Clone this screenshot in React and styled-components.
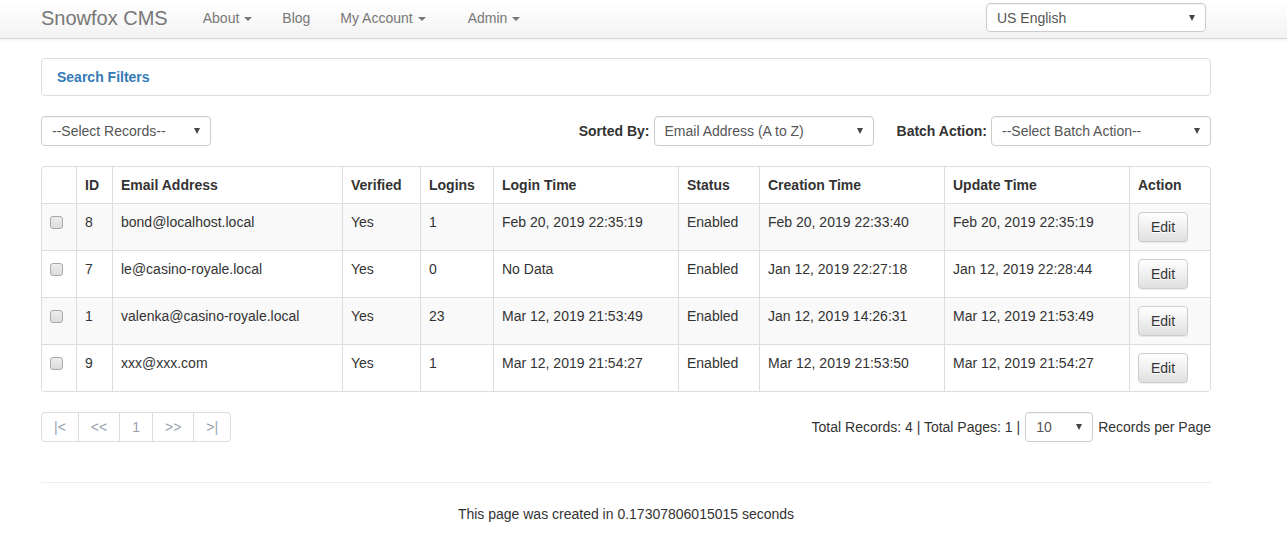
import React from "react";
import styled, { createGlobalStyle } from "styled-components";

const GlobalStyle = createGlobalStyle`
  body {
    margin: 0;
    background: #fff;
    font-family: "Liberation Sans", Arial, sans-serif;
    font-size: 14px;
    line-height: 20px;
    color: #333;
  }
  * { box-sizing: border-box; }
`;

const users = [
  { id: 8, email: "bond@localhost.local", verified: "Yes", logins: 1, login: "Feb 20, 2019 22:35:19", status: "Enabled", created: "Feb 20, 2019 22:33:40", updated: "Feb 20, 2019 22:35:19" },
  { id: 7, email: "le@casino-royale.local", verified: "Yes", logins: 0, login: "No Data", status: "Enabled", created: "Jan 12, 2019 22:27:18", updated: "Jan 12, 2019 22:28:44" },
  { id: 1, email: "valenka@casino-royale.local", verified: "Yes", logins: 23, login: "Mar 12, 2019 21:53:49", status: "Enabled", created: "Jan 12, 2019 14:26:31", updated: "Mar 12, 2019 21:53:49" },
  { id: 9, email: "xxx@xxx.com", verified: "Yes", logins: 1, login: "Mar 12, 2019 21:54:27", status: "Enabled", created: "Mar 12, 2019 21:53:50", updated: "Mar 12, 2019 21:54:27" },
];

const colWidths = [34, 36, 230, 78, 73, 185, 81, 185, 185, 81];
const headers = ["", "ID", "Email Address", "Verified", "Logins", "Login Time", "Status", "Creation Time", "Update Time", "Action"];

const Select = ({ width, height = 30, children }) => (
  <SelectBox $width={width} $height={height}>
    <span>{children}</span>
    <Arrow />
  </SelectBox>
);

const App = () => {
  return (
    <>
      <GlobalStyle />
      <Navbar>
        <NavInner>
          <Brand>Snowfox CMS</Brand>
          <NavLink $ml={35}>About <Caret /></NavLink>
          <NavLink $ml={30}>Blog</NavLink>
          <NavLink $ml={30}>My Account <Caret /></NavLink>
          <NavLink $ml={42}>Admin <Caret /></NavLink>
          <NavRight>
            <Select width={220} height={29}>US English</Select>
          </NavRight>
        </NavInner>
      </Navbar>

      <Container>
        <Panel>
          <PanelLink>Search Filters</PanelLink>
        </Panel>

        <Toolbar>
          <Select width={170}>--Select Records--</Select>
          <ToolGroup>
            <Label>Sorted By:</Label>
            <Select width={220}>Email Address (A to Z)</Select>
            <Label $ml={23}>Batch Action:</Label>
            <Select width={220}>--Select Batch Action--</Select>
          </ToolGroup>
        </Toolbar>

        <TableWrap>
          <Table>
            <colgroup>
              {colWidths.map((w, i) => (
                <col key={i} style={{ width: w }} />
              ))}
            </colgroup>
            <thead>
              <tr>
                {headers.map((h, i) => (
                  <Th key={i}>{h}</Th>
                ))}
              </tr>
            </thead>
            <tbody>
              {users.map((u, i) => (
                <Row key={u.id} $striped={i % 2 === 0}>
                  <Td><Check /></Td>
                  <Td>{u.id}</Td>
                  <Td>{u.email}</Td>
                  <Td>{u.verified}</Td>
                  <Td>{u.logins}</Td>
                  <Td>{u.login}</Td>
                  <Td>{u.status}</Td>
                  <Td>{u.created}</Td>
                  <Td>{u.updated}</Td>
                  <Td><EditButton>Edit</EditButton></Td>
                </Row>
              ))}
            </tbody>
          </Table>
        </TableWrap>

        <PagerRow>
          <Pagination>
            {["|<", "<<", "1", ">>", ">|"].map((p) => (
              <PageItem key={p}>{p}</PageItem>
            ))}
          </Pagination>
          <Totals>
            <span>Total Records: 4 | Total Pages: 1 |</span>
            <Select width={68}>10</Select>
            <span>Records per Page</span>
          </Totals>
        </PagerRow>

        <Footer>This page was created in 0.17307806015015 seconds</Footer>
      </Container>
    </>
  );
};
export default App;

const Navbar = styled.nav`
  height: 39px;
  background: linear-gradient(to bottom, #ffffff 0%, #f3f3f3 100%);
  border-bottom: 1px solid #d6d6d6;
  box-shadow: 0 1px 4px rgba(0, 0, 0, 0.06);
`;

const NavInner = styled.div`
  width: 1165px;
  margin-left: 41px;
  height: 38px;
  padding-bottom: 2px;
  display: flex;
  align-items: center;
`;

const Brand = styled.div`
  font-size: 20px;
  color: #777;
`;

const NavLink = styled.div`
  margin-left: ${(p) => p.$ml}px;
  color: #777;
  display: flex;
  align-items: center;
  gap: 5px;
`;

const Caret = styled.span`
  display: inline-block;
  width: 0;
  height: 0;
  border-top: 4px solid #777;
  border-left: 4px solid transparent;
  border-right: 4px solid transparent;
  margin-top: 1px;
`;

const NavRight = styled.div`
  margin-left: auto;
  align-self: flex-start;
  margin-top: 3px;
`;

const SelectBox = styled.div`
  width: ${(p) => p.$width}px;
  height: ${(p) => p.$height}px;
  border: 1px solid #ccc;
  border-radius: 4px;
  background: #fff;
  padding: 0 10px 0 10px;
  display: flex;
  align-items: center;
  justify-content: space-between;
  color: #555;
  white-space: nowrap;
  box-shadow: inset 0 1px 1px rgba(0, 0, 0, 0.04);
`;

const Arrow = styled.span`
  width: 0;
  height: 0;
  border-top: 6px solid #444;
  border-left: 3.5px solid transparent;
  border-right: 3.5px solid transparent;
`;

const Container = styled.div`
  width: 1170px;
  margin-left: 41px;
  padding-top: 19px;
`;

const Panel = styled.div`
  height: 38px;
  border: 1px solid #ddd;
  border-radius: 4px;
  padding: 0 15px;
  display: flex;
  align-items: center;
`;

const PanelLink = styled.span`
  color: #337ab7;
  font-weight: bold;
`;

const Toolbar = styled.div`
  margin-top: 20px;
  display: flex;
  justify-content: space-between;
  align-items: center;
`;

const ToolGroup = styled.div`
  display: flex;
  align-items: center;
`;

const Label = styled.span`
  font-weight: bold;
  margin-left: ${(p) => p.$ml || 0}px;
  margin-right: 4px;
`;

const TableWrap = styled.div`
  margin-top: 20px;
  border: 1px solid #ddd;
  border-radius: 4px;
  overflow: hidden;
`;

const Table = styled.table`
  width: 100%;
  table-layout: fixed;
  border-collapse: separate;
  border-spacing: 0;
`;

const Th = styled.th`
  text-align: left;
  padding: 8px;
  font-weight: bold;
  border-left: 1px solid #ddd;
  white-space: nowrap;
  &:first-child { border-left: none; }
`;

const Row = styled.tr`
  background: ${(p) => (p.$striped ? "#f9f9f9" : "#fff")};
`;

const Td = styled.td`
  padding: 8px;
  vertical-align: top;
  border-left: 1px solid #ddd;
  border-top: 1px solid #ddd;
  white-space: nowrap;
  &:first-child { border-left: none; }
`;

const Check = styled.span`
  display: block;
  width: 13px;
  height: 13px;
  margin-top: 4px;
  border: 1px solid #a9a9a9;
  border-radius: 3px;
  background: linear-gradient(to bottom, #ececec, #dcdcdc);
`;

const EditButton = styled.button`
  font-family: inherit;
  font-size: 14px;
  line-height: 20px;
  color: #333;
  height: 30px;
  width: 50px;
  padding: 4px 0;
  border: 1px solid #ccc;
  border-radius: 4px;
  background: linear-gradient(to bottom, #ffffff 0%, #e0e0e0 100%);
  text-shadow: 0 1px 0 #fff;
  box-shadow: 0 1px 1px rgba(0, 0, 0, 0.075);
`;

const PagerRow = styled.div`
  margin-top: 20px;
  display: flex;
  justify-content: space-between;
  align-items: center;
`;

const Pagination = styled.div`
  display: flex;
  border: 1px solid #ddd;
  border-radius: 4px;
  height: 30px;
`;

const PageItem = styled.span`
  padding: 4px 12px;
  line-height: 20px;
  color: #9a9fb0;
  border-left: 1px solid #ddd;
  &:first-child { border-left: none; }
`;

const Totals = styled.div`
  display: flex;
  align-items: center;
  gap: 5px;
`;

const Footer = styled.div`
  margin-top: 40px;
  border-top: 1px solid #eee;
  padding-top: 21px;
  text-align: center;
`;
